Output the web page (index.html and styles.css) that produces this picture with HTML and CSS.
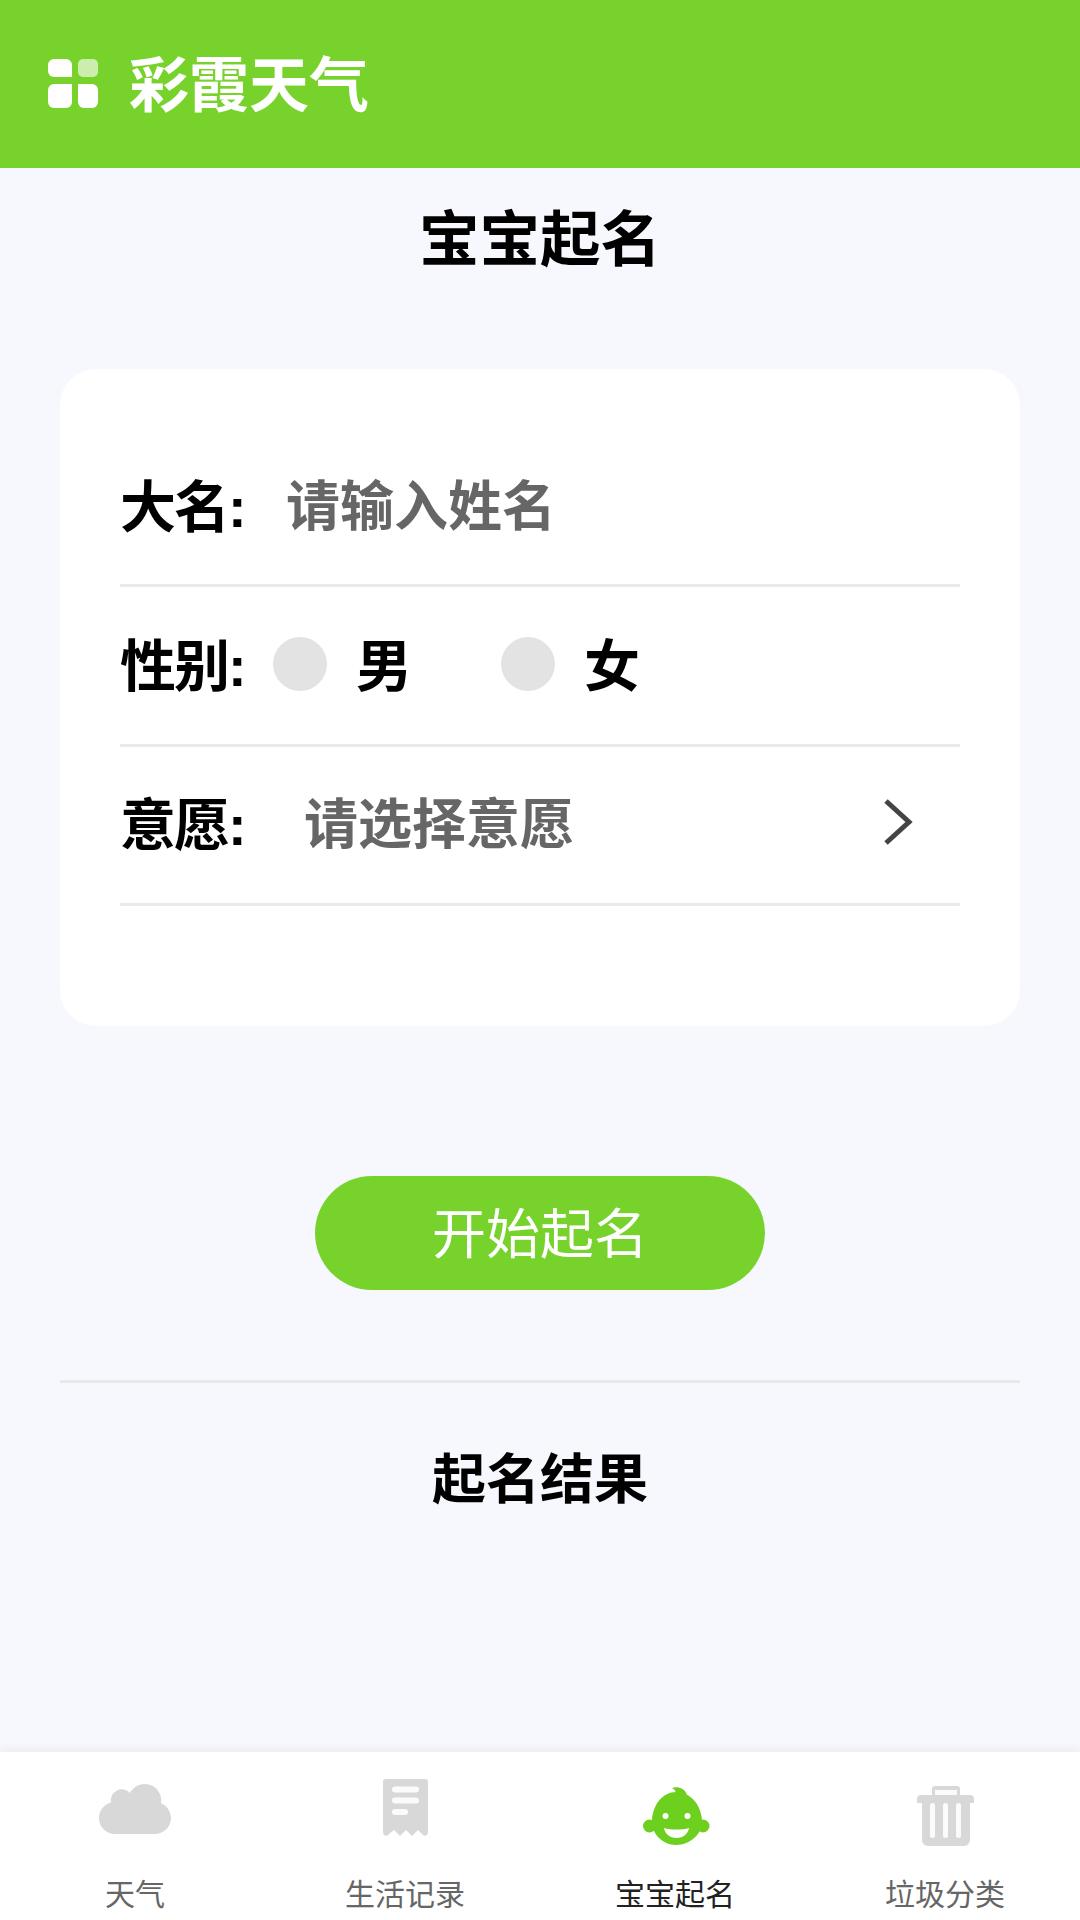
FILE: index.html
```html
<!DOCTYPE html>
<html lang="zh-CN">
<head>
    <meta charset="UTF-8">
    <meta name="viewport" content="width=device-width, initial-scale=1.0">
    <title>宝宝起名</title>
    <link rel="stylesheet" href="styles.css">
</head>
<body>
    <header class="app-bar">
        <svg class="app-logo" width="50" height="49" viewBox="0 0 50 49">
            <path fill="#fff" d="M6 0H18A6 6 0 0 1 24 6V18H6A6 6 0 0 1 0 12V6A6 6 0 0 1 6 0Z"/>
            <rect fill="#fff" opacity="0.62" x="30" y="0" width="20" height="18" rx="5"/>
            <path fill="#fff" d="M6 25H24V43A6 6 0 0 1 18 49H6A6 6 0 0 1 0 43V31A6 6 0 0 1 6 25Z"/>
            <path fill="#fff" d="M30 25H44A6 6 0 0 1 50 31V43A6 6 0 0 1 44 49H36A6 6 0 0 1 30 43Z"/>
        </svg>
        <h1>彩霞天气</h1>
    </header>

    <main>
        <h2 class="page-title">宝宝起名</h2>

        <!-- 起名表单 -->
        <form class="name-card">
            <div class="form-row">
                <span class="row-label">大名:</span>
                <span class="row-hint hint-name">请输入姓名</span>
            </div>
            <div class="form-row">
                <span class="row-label">性别:</span>
                <span class="radio-dot dot-male"></span>
                <span class="radio-text">男</span>
                <span class="radio-dot dot-female"></span>
                <span class="radio-text">女</span>
            </div>
            <div class="form-row">
                <span class="row-label">意愿:</span>
                <span class="row-hint hint-wish">请选择意愿</span>
                <svg class="row-arrow" width="30" height="48" viewBox="0 0 30 48">
                    <path d="M3 3L26 24L3 45" fill="none" stroke="#444" stroke-width="5"/>
                </svg>
            </div>
        </form>

        <button class="start-btn" type="button">开始起名</button>

        <div class="section-line"></div>
        <h3 class="result-title">起名结果</h3>
    </main>

    <!-- 底部导航 -->
    <nav class="tab-bar">
        <a class="tab" href="#">
            <svg width="90" height="90" viewBox="0 0 90 90">
                <path fill="#d8d8d8" d="M25 64A16 16 0 0 1 21 32.500A11 11 0 0 1 40 23A16.500 16.500 0 0 1 71 33.200A16 16 0 0 1 65 64Z"/>
            </svg>
            <span>天气</span>
        </a>
        <a class="tab" href="#">
            <svg width="90" height="90" viewBox="0 0 90 90">
                <path fill="#d8d8d8" d="M26 9H65A3 3 0 0 1 68 12V62C68 66 64 67 62 64L58 60L52 66L46 60L40 66L34 60L29 64C27 67 23 66 23 62V12A3 3 0 0 1 26 9Z"/>
                <g stroke="#fbfbfb" stroke-width="6" stroke-linecap="round">
                    <path d="M35 19.500H56"/>
                    <path d="M35 30.500H56"/>
                    <path d="M35 42H45"/>
                </g>
            </svg>
            <span>生活记录</span>
        </a>
        <a class="tab tab-active" href="#">
            <svg width="90" height="90" viewBox="0 0 90 90">
                <g fill="#6dd01f">
                    <circle cx="19.500" cy="56" r="6.500"/>
                    <circle cx="73" cy="56" r="6.500"/>
                    <path d="M46 22C60 22 71 34 72 50C73 64 60 75 46 75C33 75 21 64 22 50C23 34 33 22 46 22Z"/>
                    <path d="M42 18C47 16 56 18 57 26L46 24C46 21 44 19 42 18Z"/>
                </g>
                <circle fill="#fff" cx="35.500" cy="46" r="3"/>
                <circle fill="#fff" cx="57.500" cy="46" r="3"/>
                <path fill="#fff" d="M34 58C40 60 53 60 59 58C58 64 53 68 46.500 68C40 68 35 64 34 58Z"/>
            </svg>
            <span>宝宝起名</span>
        </a>
        <a class="tab" href="#">
            <svg width="90" height="90" viewBox="0 0 90 90">
                <path fill="#d8d8d8" d="M32 25V19A3 3 0 0 1 35 16H57A3 3 0 0 1 60 19V25H70A4 4 0 0 1 74 29V33H70V70A6 6 0 0 1 64 76H28A6 6 0 0 1 22 70V33H17V29A4 4 0 0 1 21 25Z"/>
                <path fill="#fbfbfb" d="M35 20H57V25H35Z"/>
                <g stroke="#fbfbfb" stroke-width="5" stroke-linecap="round">
                    <path d="M32.500 35.500V65.500"/>
                    <path d="M45.500 35.500V65.500"/>
                    <path d="M58.500 35.500V65.500"/>
                </g>
            </svg>
            <span>垃圾分类</span>
        </a>
    </nav>
</body>
</html>
```

FILE: styles.css
```css
/* 全体 */
* {
    box-sizing: border-box;
}

body {
    margin: 0;
    height: 1920px;
    display: flex;
    flex-direction: column;
    font-family: "Noto Sans CJK SC", "Noto Sans", sans-serif;
    background-color: #f6f8fd;
    color: #000;
}

/* 顶部栏 */
.app-bar {
    height: 168px;
    flex-shrink: 0;
    background-color: #77d22b;
    color: #fff;
    display: flex;
    align-items: center;
    padding-left: 48px;
}

.app-logo {
    margin-top: -1px;
}

.app-bar h1 {
    margin: 0 0 7px 31px;
    font-size: 60px;
    line-height: 70px;
    font-weight: 700;
}

main {
    flex: 1;
    padding: 0 60px;
}

.page-title {
    margin: 0;
    height: 140px;
    line-height: 134px;
    font-size: 60.500px;
    font-weight: 700;
    text-align: center;
}

/* 表单卡片 */
.name-card {
    margin-top: 61px;
    height: 657px;
    padding: 59px 60px 0;
    background-color: #fff;
    border-radius: 36px;
}

.form-row {
    height: 159.300px;
    display: flex;
    align-items: center;
    border-bottom: 3px solid #e9e9e9;
}

.row-label {
    width: 122px;
    flex-shrink: 0;
    margin-bottom: 8px;
    font-family: "Liberation Sans", "Noto Sans CJK SC", sans-serif;
    font-size: 56px;
    font-weight: 700;
    letter-spacing: -2px;
    white-space: nowrap;
}

.row-hint {
    margin-bottom: 8px;
    font-size: 54px;
    font-weight: 700;
    color: #666;
}

.hint-name {
    margin-left: 44px;
}

.hint-wish {
    margin-left: 62px;
}

.row-arrow {
    margin-left: auto;
    margin-right: 47px;
    margin-bottom: 5px;
}

.radio-dot {
    width: 54px;
    height: 54px;
    margin-bottom: 2px;
    border-radius: 50%;
    background-color: #e3e3e3;
}

.dot-male {
    margin-left: 31px;
}

.dot-female {
    margin-left: 89px;
}

.radio-text {
    margin-left: 29px;
    margin-bottom: 8px;
    font-size: 56px;
    font-weight: 700;
}

/* 按钮 */
.start-btn {
    display: block;
    width: 450px;
    height: 114px;
    margin: 150px auto 0;
    padding: 0 0 6px;
    border: none;
    border-radius: 57px;
    background-color: #77d22b;
    color: #fff;
    font-family: inherit;
    font-size: 54px;
}

.section-line {
    margin-top: 90px;
    height: 3px;
    background-color: #e9e9e9;
}

.result-title {
    margin: 35px 0 0;
    line-height: 116px;
    font-size: 54px;
    font-weight: 700;
    text-align: center;
}

/* 底部导航 */
.tab-bar {
    height: 168px;
    flex-shrink: 0;
    display: grid;
    grid-template-columns: repeat(4, 1fr);
    padding-top: 18px;
    background-color: #fff;
    box-shadow: 0 -2px 10px rgba(0, 0, 0, 0.06);
}

.tab {
    display: flex;
    flex-direction: column;
    align-items: center;
    text-decoration: none;
    color: #666;
    font-size: 30px;
    line-height: 40px;
}

.tab span {
    margin-top: 12px;
}

.tab-active {
    color: #222;
}
```
